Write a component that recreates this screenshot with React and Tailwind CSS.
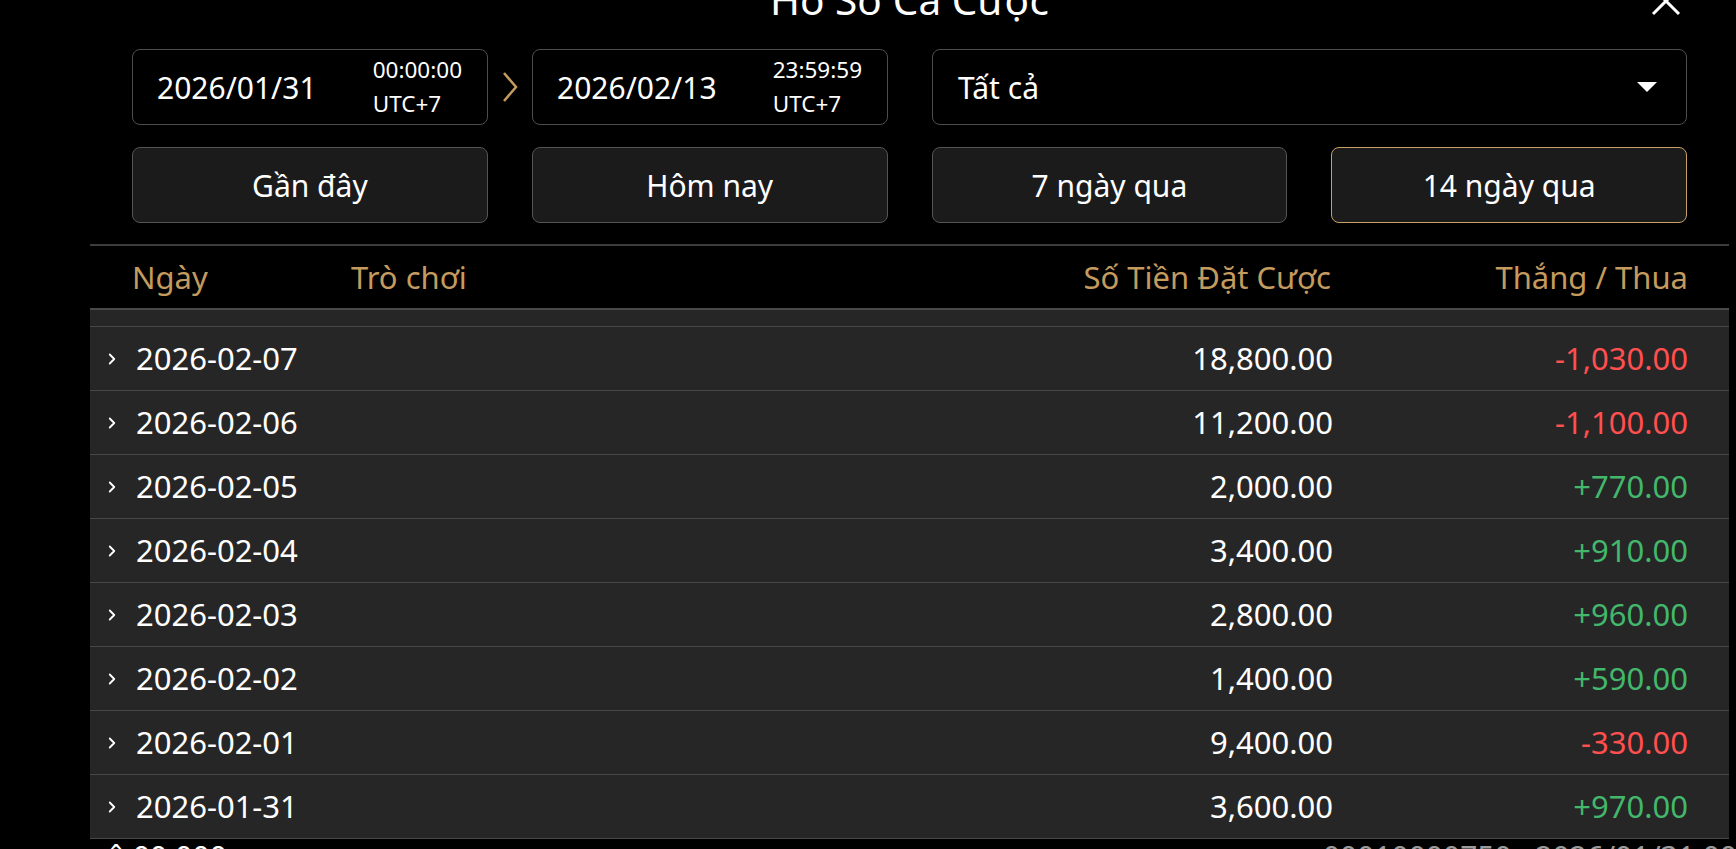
import { ChevronRight } from "lucide-react";

const rows = [
  { date: "2026-02-07", bet: "18,800.00", win: "-1,030.00" },
  { date: "2026-02-06", bet: "11,200.00", win: "-1,100.00" },
  { date: "2026-02-05", bet: "2,000.00", win: "+770.00" },
  { date: "2026-02-04", bet: "3,400.00", win: "+910.00" },
  { date: "2026-02-03", bet: "2,800.00", win: "+960.00" },
  { date: "2026-02-02", bet: "1,400.00", win: "+590.00" },
  { date: "2026-02-01", bet: "9,400.00", win: "-330.00" },
  { date: "2026-01-31", bet: "3,600.00", win: "+970.00" },
];

const ranges = ["Gần đây", "Hôm nay", "7 ngày qua", "14 ngày qua"];

function DateBox({ date, time }) {
  return (
    <div className="w-[356px] h-[76px] shrink-0 rounded-[8px] border border-[#4d4d4d] bg-black flex items-center justify-between pl-[24px] pr-[25px]">
      <span className="text-[30px] text-white">{date}</span>
      <div className="flex flex-col text-[22.5px] leading-[34px] text-white">
        <span>{time}</span>
        <span>UTC+7</span>
      </div>
    </div>
  );
}

export default function App() {
  const active = 3;

  return (
    <div
      className="h-[849px] w-full overflow-hidden bg-black text-white"
      style={{ fontFamily: '"Noto Sans", "Open Sans", sans-serif' }}
    >
      <div className="ml-[90px] w-[1639px]">
        {/* title */}
        <div className="-mt-[20px] h-[40px] grid grid-cols-[1fr_auto_1fr] items-center">
          <div />
          <h1 className="text-[40.5px] leading-[40px] text-white">Hồ Sơ Cá Cược</h1>
          <div className="flex justify-end pr-[48px]">
            <svg width="30" height="30" viewBox="0 0 30 30" className="mt-[2px]">
              <path d="M2 2 L28 28 M28 2 L2 28" stroke="white" strokeWidth="3" fill="none" />
            </svg>
          </div>
        </div>

        {/* filters */}
        <div className="px-[42px] mt-[29px]">
          <div className="flex items-center">
            <DateBox date="2026/01/31" time="00:00:00" />
            <div className="w-[44px] shrink-0 flex justify-center">
              <svg width="16" height="30" viewBox="0 0 16 30">
                <path d="M2 1 L14 15 L2 29" stroke="#c59b5e" strokeWidth="2.5" fill="none" />
              </svg>
            </div>
            <DateBox date="2026/02/13" time="23:59:59" />
            <div className="w-[44px] shrink-0" />
            <div className="flex-1 h-[76px] rounded-[8px] border border-[#4d4d4d] bg-black flex items-center justify-between pl-[25px] pr-[29px]">
              <span className="text-[30px]">Tất cả</span>
              <svg width="20" height="10" viewBox="0 0 20 10">
                <path d="M0 0 L20 0 L10 10 Z" fill="white" />
              </svg>
            </div>
          </div>

          <div className="mt-[22px] grid grid-cols-4 gap-[44px]">
            {ranges.map((r, i) => (
              <button
                key={r}
                className={`h-[76px] rounded-[8px] border bg-[#1b1b1b] text-[30px] text-white ${
                  i === active ? "border-[#c9a063]" : "border-[#555555]"
                }`}
              >
                {r}
              </button>
            ))}
          </div>
        </div>

        {/* table */}
        <div className="mt-[21px]">
          <div className="h-[66px] border-t-2 border-b-2 border-t-[#3c3c3c] border-b-[#4a4a4a] flex items-center text-[31px] text-[#c49b5e]">
            <span className="w-[261px] pl-[42px]">Ngày</span>
            <span className="flex-1">Trò chơi</span>
            <span className="pr-[2px]">Số Tiền Đặt Cược</span>
            <span className="w-[396px] pr-[41px] text-right">Thắng / Thua</span>
          </div>

          <div className="bg-[#262626]">
            <div className="h-[17px] border-b border-[#474747]" />
            {rows.map((row) => (
              <div
                key={row.date}
                className="h-[64px] border-b border-[#474747] flex items-center text-[31px]"
              >
                <div className="pl-[13px] w-[46px] flex items-center">
                  <ChevronRight size={18} strokeWidth={2.4} className="text-white" />
                </div>
                <span className="flex-1">{row.date}</span>
                <span className="text-right">{row.bet}</span>
                <span
                  className={`w-[396px] pr-[41px] text-right ${
                    row.win.startsWith("-") ? "text-[#ff4f4f]" : "text-[#43b76b]"
                  }`}
                >
                  {row.win}
                </span>
              </div>
            ))}
          </div>

          <div className="pt-[3px] flex justify-between text-[30px] leading-none whitespace-nowrap">
            <span className="pl-[17px] text-white">ô 00,000</span>
            <span className="text-[#9a9a9a] -mr-[8px]">00010000750 · 2026/01/31 00</span>
          </div>
        </div>
      </div>
    </div>
  );
}
